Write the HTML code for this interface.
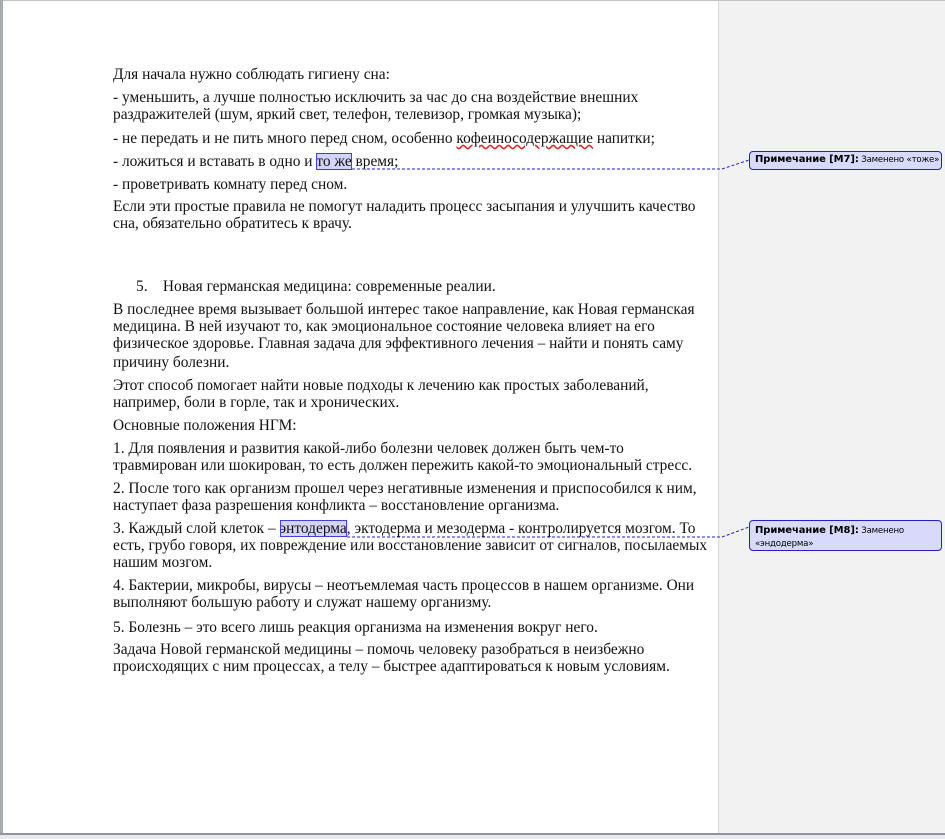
<!DOCTYPE html>
<html><head><meta charset="utf-8"><style>
body{margin:0;width:945px;height:839px;background:#fff;position:relative;overflow:hidden;font-family:"Liberation Serif","DejaVu Serif",serif;}
.l{position:absolute;left:113px;font-size:15.4px;line-height:17px;white-space:nowrap;color:#111;}
.hl{background:#d4d4f7;outline:1px solid #4040e0;outline-offset:-1px;}
.c{position:absolute;left:749px;width:193px;border:1px solid #2020d0;border-radius:4px;background:#d9d9fb;font-family:"DejaVu Sans",sans-serif;font-size:8.6px;letter-spacing:-0.2px;line-height:13px;padding:2px 5px;box-sizing:border-box;color:#000;}
.c b{font-size:10px;letter-spacing:-0.1px}
</style></head><body>
<div style="position:absolute;left:0;top:0;width:945px;height:1px;background:#c0c4c8"></div>
<div style="position:absolute;left:0;top:0;width:3px;height:839px;background:#a8acb0"></div>
<div style="position:absolute;left:718px;top:1px;width:227px;height:833px;background:#f2f2f2;border-left:1px solid #d8d8d8"></div>
<div style="position:absolute;left:0;top:833px;width:945px;height:2px;background:#9095a0"></div>
<div style="position:absolute;left:0;top:835px;width:945px;height:4px;background:#e8eaee"></div>

<div class="l" style="top:66px">Для начала нужно соблюдать гигиену сна:</div>
<div class="l" style="top:89px">- уменьшить, а лучше полностью исключить за час до сна воздействие внешних</div>
<div class="l" style="top:106px">раздражителей (шум, яркий свет, телефон, телевизор, громкая музыка);</div>
<div class="l" style="top:130px">- не передать и не пить много перед сном, особенно <span style="text-decoration:underline wavy #e02020">кофеиносодержащие</span> напитки;</div>
<div class="l" style="top:153px">- ложиться и вставать в одно и <span class="hl">то же</span> время;</div>
<div class="l" style="top:176px">- проветривать комнату перед сном.</div>
<div class="l" style="top:198px">Если эти простые правила не помогут наладить процесс засыпания и улучшить качество</div>
<div class="l" style="top:215px">сна, обязательно обратитесь к врачу.</div>
<div class="l" style="top:278px;left:136px">5.&nbsp;&nbsp;&nbsp;&nbsp;Новая германская медицина: современные реалии.</div>
<div class="l" style="top:301px">В последнее время вызывает большой интерес такое направление, как Новая германская</div>
<div class="l" style="top:318px">медицина. В ней изучают то, как эмоциональное состояние человека влияет на его</div>
<div class="l" style="top:335px">физическое здоровье. Главная задача для эффективного лечения – найти и понять саму</div>
<div class="l" style="top:354px">причину болезни.</div>
<div class="l" style="top:377px">Этот способ помогает найти новые подходы к лечению как простых заболеваний,</div>
<div class="l" style="top:394px">например, боли в горле, так и хронических.</div>
<div class="l" style="top:417px">Основные положения НГМ:</div>
<div class="l" style="top:440px">1. Для появления и развития какой-либо болезни человек должен быть чем-то</div>
<div class="l" style="top:457px">травмирован или шокирован, то есть должен пережить какой-то эмоциональный стресс.</div>
<div class="l" style="top:480px">2. После того как организм прошел через негативные изменения и приспособился к ним,</div>
<div class="l" style="top:497px">наступает фаза разрешения конфликта – восстановление организма.</div>
<div class="l" style="top:520px">3. Каждый слой клеток – <span class="hl">энтодерма</span>, эктодерма и мезодерма - контролируется мозгом. То</div>
<div class="l" style="top:537px">есть, грубо говоря, их повреждение или восстановление зависит от сигналов, посылаемых</div>
<div class="l" style="top:554px">нашим мозгом.</div>
<div class="l" style="top:577px">4. Бактерии, микробы, вирусы – неотъемлемая часть процессов в нашем организме. Они</div>
<div class="l" style="top:594px">выполняют большую работу и служат нашему организму.</div>
<div class="l" style="top:619px">5. Болезнь – это всего лишь реакция организма на изменения вокруг него.</div>
<div class="l" style="top:641px">Задача Новой германской медицины – помочь человеку разобраться в неизбежно</div>
<div class="l" style="top:658px">происходящих с ним процессах, а телу – быстрее адаптироваться к новым условиям.</div>

<svg style="position:absolute;left:0;top:0" width="945" height="839">
<polyline points="352,169 722,169 749,160" fill="none" stroke="#2020d0" stroke-dasharray="3,2" stroke-width="1"/>
<polyline points="347,537 722,537 749,527" fill="none" stroke="#2020d0" stroke-dasharray="3,2" stroke-width="1"/>
</svg>
<div class="c" style="top:151px;height:19px;line-height:14px;padding-top:1px;white-space:nowrap"><b>Примечание [M7]:</b> Заменено «тоже»</div>
<div class="c" style="top:520px;height:31px;padding-top:3px"><b>Примечание [M8]:</b> Заменено<br>«эндодерма»</div>
</body></html>
